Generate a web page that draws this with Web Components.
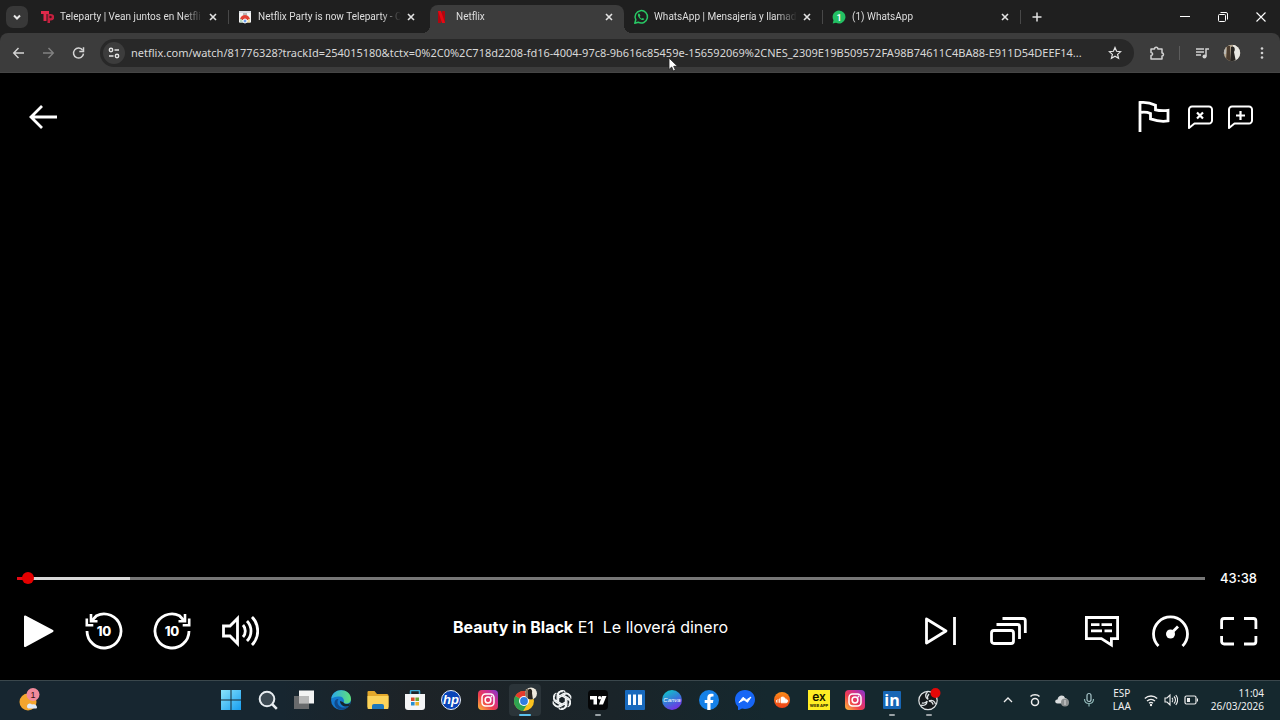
<!DOCTYPE html>
<html lang="es">
<head>
<meta charset="utf-8">
<meta name="viewport" content="width=device-width, initial-scale=1">
<title>Netflix</title>
<style>
    html, body {
        height: 100%;
        margin: 0;
        background: #000;
    }
    body {
        overflow: hidden;
        font-family: "Noto Sans", "Open Sans", sans-serif;
        font-size: 12px;
        color: #e3e3e3;
    }
</style>
</head>
<body>
<desktop-screen>
    <tab-strip slot="browser">
        <browser-tab icon="teleparty" title="Teleparty | Vean juntos en Netfli" divider></browser-tab>
        <browser-tab icon="webstore" title="Netflix Party is now Teleparty - C"></browser-tab>
        <browser-tab icon="netflix" title="Netflix" active></browser-tab>
        <browser-tab icon="whatsapp" title="WhatsApp | Mensajería y llamad" divider></browser-tab>
        <browser-tab icon="wabadge" title="(1) WhatsApp" divider></browser-tab>
    </tab-strip>
    <browser-toolbar slot="browser" url="netflix.com/watch/81776328?trackId=254015180&amp;tctx=0%2C0%2C718d2208-fd16-4004-97c8-9b616c85459e-156592069%2CNES_2309E19B509572FA98B74611C4BA88-E911D54DEEF14..."></browser-toolbar>
    <video-player>
        <icon-button slot="top-left" icon="arrow" label="Volver"></icon-button>
        <icon-button slot="top-right" icon="flag" label="Reportar un problema"></icon-button>
        <icon-button slot="top-right" icon="chatx" label="Ocultar chat"></icon-button>
        <icon-button slot="top-right" icon="chatplus" label="Iniciar party"></icon-button>
        <seek-bar slot="progress" value="11" max="2629" time="43:38"></seek-bar>
        <icon-button slot="left" icon="play" label="Reproducir"></icon-button>
        <icon-button slot="left" icon="rewind" label="Retroceder"></icon-button>
        <icon-button slot="left" icon="forward" label="Adelantar"></icon-button>
        <icon-button slot="left" icon="volume" label="Volumen"></icon-button>
        <span slot="title"><b>Beauty in Black</b> E1&nbsp; Le lloverá dinero</span>
        <icon-button slot="right" icon="next" label="Siguiente episodio"></icon-button>
        <icon-button slot="right" icon="episodes" label="Episodios"></icon-button>
        <icon-button slot="options" icon="subtitles" label="Audio y subtítulos"></icon-button>
        <icon-button slot="options" icon="speed" label="Velocidad"></icon-button>
        <icon-button slot="options" icon="fullscreen" label="Pantalla completa"></icon-button>
    </video-player>
    <task-bar slot="taskbar">
        <icon-button slot="widgets" icon="weather" label="Widgets"></icon-button>
        <task-app icon="start" label="Inicio"></task-app>
        <task-app icon="search" label="Buscar"></task-app>
        <task-app icon="taskview" label="Vista de tareas"></task-app>
        <task-app icon="edge" label="Edge"></task-app>
        <task-app icon="folder" label="Explorador"></task-app>
        <task-app icon="store" label="Store"></task-app>
        <task-app icon="hp" label="HP"></task-app>
        <task-app icon="instagram" label="Instagram"></task-app>
        <task-app icon="chrome" label="Chrome" active></task-app>
        <task-app icon="openai" label="ChatGPT"></task-app>
        <task-app icon="tradingview" label="TradingView" running></task-app>
        <task-app icon="bars" label="Panel"></task-app>
        <task-app icon="canva" label="Canva"></task-app>
        <task-app icon="facebook" label="Facebook"></task-app>
        <task-app icon="messenger" label="Messenger"></task-app>
        <task-app icon="soundcloud" label="SoundCloud"></task-app>
        <task-app icon="ex" label="EX"></task-app>
        <task-app icon="instagram" label="Instagram"></task-app>
        <task-app icon="linkedin" label="LinkedIn" running></task-app>
        <task-app icon="obs" label="OBS" running></task-app>
        <system-tray slot="tray" lang1="ESP" lang2="LAA" time="11:04" date="26/03/2026"></system-tray>
    </task-bar>
</desktop-screen>

<script>
// [width, height, markup]
const ICONS = {
    // browser
    chevron: [12, 12, '<path d="M3 4.5l3 3 3-3" fill="none" stroke="#e8e8e8" stroke-width="2"/>'],
    close: [10, 10, '<path d="M2 2l6 6M8 2L2 8" stroke="#e3e3e3" stroke-width="1.6"/>'],
    plus: [12, 12, '<path d="M6 1.5v9M1.5 6h9" stroke="#e3e3e3" stroke-width="1.5"/>'],
    minimize: [12, 12, '<path d="M1 5.5h10" stroke="#fff"/>'],
    restore: [12, 12, '<rect x="1.5" y="3.5" width="7" height="7" rx="1" fill="none" stroke="#fff"/><path d="M3.500 1.5H9A1.5 1.5 0 0 1 10.500 3v5.500" fill="none" stroke="#fff"/>'],
    winclose: [12, 12, '<path d="M1.5 1.5l9 9M10.500 1.5l-9 9" stroke="#fff" stroke-width="1.1"/>'],
    navback: [14, 14, '<path d="M12 7H2M6.500 2L1.700 7l4.800 5" fill="none" stroke="#d5d5d5" stroke-width="1.4"/>'],
    navnext: [14, 14, '<path d="M1 7h10M6.500 2l4.800 5-4.800 5" fill="none" stroke="#818181" stroke-width="1.4"/>'],
    reload: [14, 14, '<path d="M10.700 4.300A5 5 0 1 0 11.500 7.600" fill="none" stroke="#d5d5d5" stroke-width="1.5"/><path d="M11.500 1.300v4.200H7.300" fill="none" stroke="#d5d5d5" stroke-width="1.5"/>'],
    site: [14, 14, '<g fill="none" stroke="#e3e3e3" stroke-width="1.4"><circle cx="4" cy="4" r="1.7"/><path d="M7.500 4H12M2 10h4.500"/><circle cx="10" cy="10" r="1.7"/></g>'],
    star: [14, 14, '<path d="M7 1.500l1.600 3.800 4.100.35-3.100 2.700.95 4L7 10.200l-3.550 2.150.95-4-3.100-2.700 4.100-.35z" fill="none" stroke="#e3e3e3" stroke-width="1.2"/>'],
    puzzle: [16, 16, '<path d="M2 4h3.500c0-2.400 3.400-2.400 3.400 0H13v4c2 .1 2 2.900 0 3v3H2v-3.600c2.200-.2 2.200-2.600 0-2.800z" fill="none" stroke="#d2d2d2" stroke-width="1.5" stroke-linejoin="round"/>'],
    media: [14, 14, '<path d="M1 3h8M1 6h8M1 9h5" stroke="#d2d2d2" stroke-width="1.4"/><path d="M11 10.500V3h3" fill="none" stroke="#d2d2d2" stroke-width="1.5"/><circle cx="9.500" cy="10.500" r="2" fill="#d2d2d2"/>'],
    avatar: [18, 18, '<clipPath id="a"><circle cx="9" cy="9" r="8.200"/></clipPath><g clip-path="url(#a)"><path fill="#b5a68f" d="M0 0h18v18H0z"/><path fill="#e9e8e2" d="M10 0h8v18h-8z"/><path fill="#4b3c2e" d="M4 2h3v15H3z"/><path fill="#292622" d="M8 3c3-2 5 2 3 5l2 10H7z"/><path fill="#b9b8b4" d="M0 2h3v8H0z"/></g>'],
    menu: [6, 14, '<g fill="#d2d2d2"><circle cx="3" cy="2.500" r="1.300"/><circle cx="3" cy="7" r="1.300"/><circle cx="3" cy="11.500" r="1.300"/></g>'],
    teleparty: [14, 14, '<path d="M1 1h8v3H6.500v7h-3V4H1z" fill="#e0294b"/><path d="M7.500 4H11a3 3 0 0 1 0 6.500h-1V13H7.500z" fill="#c4203f"/><circle cx="10.500" cy="7" r="1.200" fill="#42101a"/>'],
    webstore: [14, 14, '<path fill="#f4f4f4" d="M1 1h12v11.500H1z"/><path d="M1 1h12v2H1z" fill="#d8dde2"/><path d="M2 10a5 5 0 0 1 10 0z" fill="#e04235"/><path d="M2 9v3.500h3.500L3.500 9z" fill="#b9dcc2"/><path d="M12 9v3.500H8.500l2-3.500z" fill="#f5dfa0"/><circle cx="7" cy="11" r="2" fill="#6ea1ee" stroke="#fff"/><path d="M5 4h4" stroke="#777"/>'],
    netflix: [14, 14, '<path d="M2 1h3v12H2zM6 1h3v12H6z" fill="#b1060f"/><path d="M2 1h3l4 12H6z" fill="#e50914"/>'],
    whatsapp: [16, 16, '<path d="M1.800 14.200l1-3.500a6.200 6.200 0 1 1 2.400 2.500z" fill="none" stroke="#28c864" stroke-width="1.5" stroke-linejoin="round"/><path d="M5.500 4.500c-1.500 1.500.2 4 1.500 5.200 1.500 1.300 3.400 2.200 4.400.3l-1.600-1.100-1 .9c-.9-.4-1.700-1.200-2.100-2.100l.7-.9-.9-2.100z" fill="#28c864"/>'],
    wabadge: [14, 14, '<path d="M7 .5a6.500 6.500 0 1 1-3 12.300L.7 13.500l.8-3.200A6.500 6.500 0 0 1 7 .5z" fill="#23c063"/><text x="7" y="10.500" text-anchor="middle" font-size="9" font-weight="600" fill="#fff">1</text>'],

    // player
    arrow: [32, 32, '<path d="M30 16H4M15 5L4 16l11 11" fill="none" stroke="#fff" stroke-width="2.8"/>'],
    flag: [36, 36, '<path d="M3 33V3.500c6-.7 11 .5 15.500 2.700v4.600c4 1 8 1 12.500.6v10.500c-6 1-11 .3-17.500-2V14.500c-3.500-1.500-7-1.500-10.500-1" fill="none" stroke="#fff" stroke-width="2.8"/>'],
    chatx: [26, 26, '<path d="M2 24V5.500a3 3 0 0 1 3-3h17a3 3 0 0 1 3 3v11a3 3 0 0 1-3 3H7.500z" fill="none" stroke="#fff" stroke-width="2" stroke-linejoin="round"/><path d="M10 8.500l6 6M16 8.500l-6 6" stroke="#fff" stroke-width="2.2"/>'],
    chatplus: [26, 26, '<path d="M2 24V5.500a3 3 0 0 1 3-3h17a3 3 0 0 1 3 3v11a3 3 0 0 1-3 3H7.500z" fill="none" stroke="#fff" stroke-width="2" stroke-linejoin="round"/><path d="M13.500 7v9M9 11.500h9" stroke="#fff" stroke-width="2.2"/>'],
    play: [32, 38, '<path d="M2 4.500L29.500 19 2 34z" fill="#fff" stroke="#fff" stroke-width="2" stroke-linejoin="round"/>'],
    rewind: [38, 38, '<path d="M2 19A17 17 0 1 0 11.500 3.700L6.500 9" fill="none" stroke="#fff" stroke-width="2.8"/><path d="M6 2v7.300h6.500M1.800 6.500v6.800h6.500" fill="none" stroke="#fff" stroke-width="2.6"/><text x="19" y="23.500" text-anchor="middle" font-family="Inter, sans-serif" font-size="13" font-weight="800" fill="#fff">10</text>'],
    forward: [38, 38, '<path d="M36 19A17 17 0 1 1 26.500 3.700L31.500 9" fill="none" stroke="#fff" stroke-width="2.8"/><path d="M32 2v7.300h-6.500M36.200 6.500v6.800h-6.500" fill="none" stroke="#fff" stroke-width="2.6"/><text x="19" y="23.500" text-anchor="middle" font-family="Inter, sans-serif" font-size="13" font-weight="800" fill="#fff">10</text>'],
    volume: [38, 38, '<path d="M2.500 14H9l7.500-7.500v25L9 24H2.500zM22 13a9 9 0 0 1 0 12M26 9a14.500 14.500 0 0 1 0 20M31 5a20 20 0 0 1 0 28" fill="none" stroke="#fff" stroke-width="2.8"/>'],
    next: [38, 38, '<path d="M4.500 7L24 19 4.500 31z" fill="none" stroke="#fff" stroke-width="2.8" stroke-linejoin="round"/><path d="M32.500 5v28" stroke="#fff" stroke-width="2.8"/>'],
    episodes: [38, 38, '<g fill="none" stroke="#fff" stroke-width="2.8"><rect x="1.5" y="18.500" width="22" height="13" rx="2.500"/><path d="M6.500 12.500h21a2 2 0 0 1 2 2V27M12.500 6.500H33a2.300 2.300 0 0 1 2.300 2.300V21"/></g>'],
    subtitles: [38, 38, '<path d="M2.400 5.500h31.200v21.100h-6.200V33l-10-6.400h-15z" fill="none" stroke="#fff" stroke-width="2.8"/><path d="M7 12.700h8.500M17.500 12.700H28M7 18.900h11M20.500 18.900H28" stroke="#fff" stroke-width="2.8"/>'],
    speed: [38, 38, '<path d="M6.500 34A17 17 0 1 1 30.500 34" fill="none" stroke="#fff" stroke-width="2.8"/><circle cx="18.500" cy="22" r="4.500" fill="#fff"/><path d="M18.500 22l7.500-7.500" stroke="#fff" stroke-width="2.8"/>'],
    fullscreen: [38, 38, '<path d="M1.600 17V9a2.500 2.500 0 0 1 2.500-2.500H14M24 6.500h9.400A2.500 2.500 0 0 1 35.900 9v8M35.900 24v5.500a2.500 2.500 0 0 1-2.500 2.500H24M14 32H4.100a2.500 2.500 0 0 1-2.500-2.500V24" fill="none" stroke="#fff" stroke-width="2.8"/>'],

    // taskbar
    weather: [26, 26, '<circle cx="11" cy="15" r="8.500" fill="#f3a52e"/><path d="M10 19.500c0-3 3.500-4 5-2 3-1 5 .5 5 3 0 1-1 1-2 1h-6c-1 0-2-.5-2-2z" fill="#dfe9f7"/><circle cx="16" cy="7.500" r="6.500" fill="#f08a9b"/><text x="16" y="11" text-anchor="middle" font-size="9" fill="#311">1</text>'],
    start: [20, 20, '<linearGradient id="w" x1="0" y1="0" x2="1" y2="1"><stop stop-color="#8be4fb"/><stop offset="1" stop-color="#169df0"/></linearGradient><path d="M0 0h9.500v9.500H0zM10.500 0H20v9.500h-9.500zM0 10.500h9.500V20H0zM10.500 10.500H20V20h-9.500z" fill="url(#w)"/>'],
    search: [20, 20, '<circle cx="9" cy="9" r="7.300" fill="#3d4a53" stroke="#e8edf1" stroke-width="2"/><path d="M14 14l4.800 4.800" stroke="#e8edf1" stroke-width="2.500"/>'],
    taskview: [20, 20, '<path d="M5 .5h15v13H5z" fill="#f3f3f3"/><path d="M0 6h15v13H0z" fill="#777" opacity=".85"/><path d="M5 6h10v7.500H5z" fill="#b9b9b9"/>'],
    edge: [20, 20, '<linearGradient id="e"><stop stop-color="#2ba7e8"/><stop offset="1" stop-color="#5fe27a"/></linearGradient><circle cx="10" cy="10" r="10" fill="#1379cf"/><path d="M.3 9C1-3 20-2.500 20 9c0 5-6 5.500-7.500 3.500C14 10 12 6.500 8.500 6.500 4 6.500.5 8 .3 9z" fill="url(#e)"/><path d="M7.500 9c-3 4 1 9 6 8.500 2.500 0 4-1.500 5-2.500C15 22 5 21 3.500 14 3 10.500 5.500 8.500 7.500 9z" fill="#114a8b"/><path d="M12.500 12.500c1.500 2 5 2 7 0L18 16c-4 1.500-9-.5-9-5l3 1z" fill="#17262f"/>'],
    folder: [22, 20, '<path d="M.5 2a1 1 0 0 1 1-1h6l2.500 3H20a1.500 1.500 0 0 1 1.500 1.500V17H.5z" fill="#e3a82b"/><path d="M.5 6h21v12a1 1 0 0 1-1 1h-19a1 1 0 0 1-1-1z" fill="#fbd35a"/><path d="M5 19v-3a2 2 0 0 1 2-2h8a2 2 0 0 1 2 2v3z" fill="#1c77bc"/>'],
    store: [20, 20, '<path d="M5.500 4V1.500a1 1 0 0 1 1-1h7a1 1 0 0 1 1 1V4" fill="none" stroke="#3ca8d2" stroke-width="1.5"/><path d="M0 4h20v13a3 3 0 0 1-3 3H3a3 3 0 0 1-3-3z" fill="#f4f5f6"/><path d="M6 7.500h3.600V11H6z" fill="#d74b28"/><path d="M10.400 7.500H14V11h-3.600z" fill="#6ba634"/><path d="M6 12h3.600v3.500H6z" fill="#268fd0"/><path d="M10.400 12H14v3.500h-3.600z" fill="#edb32a"/>'],
    hp: [22, 22, '<circle cx="11" cy="11" r="9.500" fill="#0a44b8" stroke="#e4ecf8"/><text x="11" y="15" text-anchor="middle" font-size="13" font-style="italic" font-weight="600" fill="#fff">hp</text>'],
    instagram: [20, 20, '<linearGradient id="i" x1="0" y1="1" x2="1" y2="0"><stop stop-color="#fdc03b"/><stop offset=".4" stop-color="#ee3e4c"/><stop offset=".7" stop-color="#ce2d91"/><stop offset="1" stop-color="#7a3bd0"/></linearGradient><rect width="20" height="20" rx="4" fill="url(#i)"/><rect x="4" y="4" width="12" height="12" rx="3.500" fill="none" stroke="#fff" stroke-width="1.5"/><circle cx="10" cy="10" r="2.900" fill="none" stroke="#fff" stroke-width="1.5"/><circle cx="13.500" cy="6.500" r=".9" fill="#fff"/>'],
    chrome: [26, 26, '<circle cx="12" cy="14" r="10" fill="#fbc21e"/><path d="M12 14L3.300 9A10 10 0 0 1 20.700 9z" fill="#e53b2d"/><path d="M12 14L3.300 9A10 10 0 0 0 11 24l5-8z" fill="#2fa351"/><circle cx="12" cy="14" r="5" fill="#fff"/><circle cx="12" cy="14" r="3.900" fill="#2f7de1"/><clipPath id="c"><circle cx="19" cy="6.500" r="6"/></clipPath><g clip-path="url(#c)"><path d="M13 0h13v13H13z" fill="#eee9dd"/><path d="M13 0h3v13h-3z" fill="#85745f"/><path d="M16 3c2-3 5 0 4 3l1 7h-5z" fill="#28231e"/></g>'],
    openai: [22, 22, '<g fill="none" stroke="#f2f5f6" stroke-width="1.4" stroke-linejoin="round"><path id="p" d="M7.500 9V5.500A4 4 0 0 1 14.200 2.700M7.500 13V7.500l5-2.900A4 4 0 0 1 18.500 7.500"/><use href="#p" transform="rotate(60 11 11)"/><use href="#p" transform="rotate(120 11 11)"/><use href="#p" transform="rotate(180 11 11)"/><use href="#p" transform="rotate(240 11 11)"/><use href="#p" transform="rotate(300 11 11)"/></g>'],
    tradingview: [20, 20, '<rect width="20" height="20" rx="4" fill="#050607"/><path d="M2 6h7v8.500H5.500V9.500H2zM14 6h4.500L15 14.500h-4z" fill="#fff"/><circle cx="11.700" cy="7.800" r="1.800" fill="#fff"/>'],
    bars: [20, 20, '<rect width="20" height="20" rx="1" fill="#1769bd"/><path d="M3 4.500h3v10.500H3zM8 4.500h3v10.500H8zM13 4.500h4v10.500h-4z" fill="#f6fbff"/>'],
    canva: [20, 20, '<linearGradient id="v" x1=".2" y1="0" x2=".7" y2="1"><stop stop-color="#11c7c9"/><stop offset=".5" stop-color="#347ad8"/><stop offset="1" stop-color="#7b2be5"/></linearGradient><circle cx="10" cy="10" r="10" fill="url(#v)"/><text x="10" y="12" text-anchor="middle" font-size="6" font-style="italic" fill="#fff">Canva</text>'],
    facebook: [20, 20, '<circle cx="10" cy="10" r="10" fill="#1581e8"/><path d="M8.300 20v-7H5.700v-3h2.600V7.800c0-2.700 1.500-4.100 3.900-4.100.8 0 1.700.1 2.300.2v2.600h-1.300c-1.300 0-1.700.8-1.700 1.600V10h2.900l-.5 3h-2.400v7z" fill="#fff"/>'],
    messenger: [20, 20, '<path d="M10 0c5.700 0 10 4 10 9.500S15.700 19 10 19c-1 0-2-.1-3-.4L4 20c-.5.200-1-.1-1-.6v-2.600A9.200 9.200 0 0 1 0 9.500C0 4 4.300 0 10 0z" fill="#1766f5"/><path d="M4 12.500l4-5.200 3.500 2.600L16 7l-3.500 5.300L9 9.800z" fill="#fff" stroke="#fff" stroke-linejoin="round"/>'],
    soundcloud: [20, 20, '<linearGradient id="s" x2="0" y2="1"><stop stop-color="#fa8b18"/><stop offset="1" stop-color="#ed4018"/></linearGradient><circle cx="10" cy="10" r="8" fill="url(#s)"/><path d="M9 12.800V7.500c2-1.200 4 0 4.300 1.700 3-.4 3.200 3.600.7 3.600zM7.500 8.500v4.300M6 9v3.800M4.500 10v2.500" fill="#fff" stroke="#fff" stroke-width=".8"/>'],
    ex: [22, 20, '<path fill="#ffed24" d="M0 0h22v20H0z"/><text x="11" y="11" text-anchor="middle" font-family="Inter, sans-serif" font-size="12" font-weight="600" fill="#151500">ex</text><text x="11" y="17" text-anchor="middle" font-family="Inter, sans-serif" font-size="4" font-weight="700" fill="#262500">WEB APP</text>'],
    linkedin: [20, 20, '<rect x="1" y="1" width="18" height="18" rx="1" fill="#1766b5"/><text x="10" y="16" text-anchor="middle" font-family="Open Sans, sans-serif" font-size="16" font-weight="700" fill="#fff">in</text>'],
    obs: [26, 26, '<circle cx="12" cy="13.500" r="9.200" fill="#15191b" stroke="#dfe3e4" stroke-width="1.2"/><g fill="none" stroke="#dfe3e4" stroke-width="1.3"><path id="o" d="M12 12.500c-3-2-3-5-.5-7.500M12 12.500c-1-2-.5-4 1-5.500"/><use href="#o" transform="rotate(120 12 13.500)"/><use href="#o" transform="rotate(240 12 13.500)"/></g><circle cx="19.500" cy="6" r="5" fill="#e30808"/>'],

    // tray
    up: [10, 10, '<path d="M1 7l4-4 4 4" fill="none" stroke="#eee" stroke-width="1.3"/>'],
    beacon: [14, 14, '<circle cx="7" cy="9" r="3.500" fill="none" stroke="#eee" stroke-width="1.5"/><path d="M2.500 3.500c2-2.300 7-2.300 9 0" fill="none" stroke="#eee" stroke-width="1.4"/>'],
    cloud: [16, 14, '<path d="M3.500 10.500C0 10 1 6 3.500 6.500 4 2 10 1 11 5c3 0 3.500 5.500 0 5.500z" fill="#d9dcdd"/><circle cx="11" cy="9.500" r="4" fill="#8c9090"/><path d="M11 7v5" stroke="#ddd"/>'],
    mic: [12, 16, '<rect x="4" y="1.500" width="4" height="8" rx="2" fill="none" stroke="#a7c5c9" stroke-width="1.2"/><path d="M1.500 7c0 6 9 6 9 0M6 11.500v3" fill="none" stroke="#8fb7b6" stroke-width="1.2"/>'],
    wifi: [14, 14, '<g fill="none" stroke="#eee" stroke-width="1.3"><path d="M.8 5.500a9 9 0 0 1 12.400 0M3 8a6 6 0 0 1 8 0M5 10.300a3 3 0 0 1 4 0"/></g><circle cx="7" cy="12" r="1.200" fill="#eee"/>'],
    sound: [14, 14, '<path d="M1 5h2l3-3v10L3 9H1zM8 5c1 1 1 3 0 4M10 3.500c2 2 2 5 0 7M11.800 2c2.200 3 2.200 7 0 10" fill="none" stroke="#eee" stroke-width="1.1"/>'],
    battery: [14, 14, '<rect x="1" y="3" width="11" height="8" rx="1.500" fill="none" stroke="#eee" stroke-width="1.2"/><path d="M3 5h3v4H3zM13 5.500h1v3h-1z" fill="#eee"/>']
};

// builds a template from a css string and an html string
function makeTemplate(css, html){
    let template = document.createElement('template');
    template.innerHTML = `<style>${css}</style>${html}`;
    return template;
}

class BaseElement extends HTMLElement {
    constructor(template){
        super();
        this.attachShadow({mode:'open'});
        this.shadowRoot.appendChild(template.content.cloneNode(true));
    }
    find(selector){
        return this.shadowRoot.querySelector(selector);
    }
}

class UiIcon extends HTMLElement {
    constructor(){
        super();
        this.attachShadow({mode:'open'});
    }
    connectedCallback(){
        let [w, h, body] = ICONS[this.getAttribute("name")];
        this.shadowRoot.innerHTML = `
            <style>:host { display: block; flex: none; } svg { display: block; }</style>
            <svg width="${w}" height="${h}" viewBox="0 0 ${w} ${h}" aria-hidden="true">${body}</svg>`;
    }
}
customElements.define('ui-icon', UiIcon);

let buttonTemplate = makeTemplate(`
    :host { display: block; flex: none; }
    button {
        display: grid;
        place-items: center;
        width: 100%;
        height: 100%;
        margin: 0;
        padding: 0;
        border: 0;
        border-radius: inherit;
        background: none;
        cursor: pointer;
    }
`, `<button type="button"></button>`);

class IconButton extends BaseElement {
    constructor(){
        super(buttonTemplate);
    }
    connectedCallback(){
        let button = this.find("button");
        button.setAttribute("aria-label", this.getAttribute("label"));
        button.innerHTML = `<ui-icon name="${this.getAttribute("icon")}"></ui-icon>`;
    }
}
customElements.define('icon-button', IconButton);

let screenTemplate = makeTemplate(`
    :host {
        display: flex;
        flex-direction: column;
        height: 100vh;
    }
    .browser, .taskbar { flex: none; }
    main {
        flex: 1;
        min-height: 0;
        display: flex;
    }
    .cursor {
        position: fixed;
        left: 668px;
        top: 57px;
        pointer-events: none;
    }
`, `
    <header class="browser"><slot name="browser"></slot></header>
    <main><slot></slot></main>
    <footer class="taskbar"><slot name="taskbar"></slot></footer>
    <svg class="cursor" width="12" height="16" viewBox="0 0 12 16" aria-hidden="true">
        <path d="M1 1v11.500l2.700-2.500 1.700 4 2-.9-1.700-3.800H9.500z" fill="#fff" stroke="#222" stroke-width=".8"/>
    </svg>
`);
customElements.define('desktop-screen', class extends BaseElement {
    constructor(){ super(screenTemplate); }
});

let stripTemplate = makeTemplate(`
    :host {
        display: flex;
        align-items: center;
        height: 33px;
        padding-left: 6px;
        background: #1f1f1f;
    }
    .search {
        width: 22px;
        height: 22px;
        margin-right: 6px;
        border-radius: 7px;
        background: #383838;
    }
    nav {
        display: flex;
        flex: 0 1 986px;
        min-width: 0;
        align-self: stretch;
        gap: 4px;
        padding-top: 5px;
        box-sizing: border-box;
    }
    .add { width: 22px; height: 22px; margin-left: 6px; }
    .window { display: flex; margin-left: auto; }
    .window icon-button { width: 38px; height: 32px; }
`, `
    <icon-button class="search" icon="chevron" label="Buscar pestañas"></icon-button>
    <nav><slot></slot></nav>
    <icon-button class="add" icon="plus" label="Nueva pestaña"></icon-button>
    <div class="window">
        <icon-button icon="minimize" label="Minimizar"></icon-button>
        <icon-button icon="restore" label="Restaurar"></icon-button>
        <icon-button icon="winclose" label="Cerrar"></icon-button>
    </div>
`);
customElements.define('tab-strip', class extends BaseElement {
    constructor(){ super(stripTemplate); }
});

let tabTemplate = makeTemplate(`
    :host {
        position: relative;
        display: flex;
        flex: 1;
        min-width: 0;
        align-items: center;
        padding: 0 9px 4px 5px;
        border-radius: 8px 8px 0 0;
    }
    :host([active]) { background: #3c3c3c; }
    :host([active])::before, :host([active])::after {
        content: "";
        position: absolute;
        bottom: 0;
        width: 8px;
        height: 8px;
    }
    :host([active])::before { right: 100%; background: radial-gradient(circle at 0 0, #1f1f1f 8px, #3c3c3c 8px); }
    :host([active])::after { left: 100%; background: radial-gradient(circle at 100% 0, #1f1f1f 8px, #3c3c3c 8px); }
    :host([divider])::after {
        content: "";
        position: absolute;
        left: 100%;
        top: 5px;
        width: 1px;
        height: 14px;
        background: #484848;
    }
    a {
        display: flex;
        flex: 1;
        min-width: 0;
        align-items: center;
        gap: 5px;
        color: #dedede;
        font-family: Roboto, "Noto Sans", sans-serif;
        font-size: 10px;
        line-height: 16px;
        text-decoration: none;
    }
    .icon { display: grid; place-items: center; width: 16px; flex: none; }
    .title {
        flex: 1;
        overflow: hidden;
        white-space: nowrap;
        -webkit-mask-image: linear-gradient(to left, transparent, #000 20px);
        mask-image: linear-gradient(to left, transparent, #000 20px);
    }
    icon-button { width: 12px; height: 12px; margin-left: 4px; }
`, `
    <a href="#"><span class="icon"></span><span class="title"></span></a>
    <icon-button icon="close" label="Cerrar pestaña"></icon-button>
`);
class BrowserTab extends BaseElement {
    constructor(){
        super(tabTemplate);
    }
    connectedCallback(){
        this.find(".icon").innerHTML = `<ui-icon name="${this.getAttribute("icon")}"></ui-icon>`;
        this.find(".title").textContent = this.getAttribute("title");
    }
}
customElements.define('browser-tab', BrowserTab);

let toolbarTemplate = makeTemplate(`
    :host { display: block; background: #1f1f1f; }
    .bar {
        display: flex;
        align-items: center;
        height: 40px;
        padding: 0 3px 0 4px;
        box-sizing: border-box;
        border-bottom: 1px solid #454545;
        border-radius: 8px 8px 0 0;
        background: #3c3c3c;
    }
    .bar > icon-button { width: 30px; height: 28px; }
    .address {
        display: flex;
        flex: 1;
        min-width: 0;
        align-items: center;
        height: 28px;
        margin: 0 8px 0 6px;
        padding: 0 6px 0 3px;
        box-sizing: border-box;
        border-radius: 14px;
        background: #282828;
    }
    .site { width: 22px; height: 22px; border-radius: 11px; background: #3c3c3c; }
    .star { width: 26px; height: 24px; }
    input {
        flex: 1;
        min-width: 0;
        height: 20px;
        margin: 0 8px 0 6px;
        padding: 0;
        border: 0;
        outline: 0;
        background: none;
        color: #d8d8d8;
        font: 11px/20px "Noto Sans", "Open Sans", sans-serif;
        text-overflow: ellipsis;
    }
    .line { width: 1px; height: 14px; margin: 0 7px; background: #5c5c5c; }
`, `
    <div class="bar">
        <icon-button icon="navback" label="Atrás"></icon-button>
        <icon-button icon="navnext" label="Adelante"></icon-button>
        <icon-button icon="reload" label="Recargar"></icon-button>
        <div class="address">
            <icon-button class="site" icon="site" label="Información del sitio"></icon-button>
            <input type="text" aria-label="Dirección" spellcheck="false">
            <icon-button class="star" icon="star" label="Agregar a favoritos"></icon-button>
        </div>
        <icon-button icon="puzzle" label="Extensiones"></icon-button>
        <span class="line"></span>
        <icon-button icon="media" label="Control de medios"></icon-button>
        <icon-button icon="avatar" label="Perfil"></icon-button>
        <icon-button icon="menu" label="Menú"></icon-button>
    </div>
`);
class BrowserToolbar extends BaseElement {
    constructor(){
        super(toolbarTemplate);
    }
    connectedCallback(){
        this.find("input").value = this.getAttribute("url");
    }
}
customElements.define('browser-toolbar', BrowserToolbar);

let playerTemplate = makeTemplate(`
    :host {
        display: flex;
        flex: 1;
        flex-direction: column;
        background: #000;
        color: #fff;
        font-family: Inter, "Liberation Sans", sans-serif;
    }
    .top {
        display: flex;
        align-items: center;
        justify-content: space-between;
        height: 88px;
        padding: 0 27px;
    }
    .actions { display: flex; align-items: center; gap: 14px; }
    .picture { flex: 1; }
    .controls {
        display: flex;
        align-items: center;
        height: 82px;
        padding: 0 22px 0 23px;
        margin-bottom: 8px;
    }
    .group { display: flex; gap: 30px; }
    .options { margin-left: 56px; }
    .title {
        flex: 1;
        padding-bottom: 8px;
        font-size: 16px;
        line-height: 24px;
        text-align: center;
        white-space: nowrap;
    }
`, `
    <div class="top">
        <slot name="top-left"></slot>
        <div class="actions"><slot name="top-right"></slot></div>
    </div>
    <div class="picture"></div>
    <slot name="progress"></slot>
    <div class="controls">
        <div class="group"><slot name="left"></slot></div>
        <div class="title"><slot name="title"></slot></div>
        <div class="group"><slot name="right"></slot></div>
        <div class="group options"><slot name="options"></slot></div>
    </div>
`);
customElements.define('video-player', class extends BaseElement {
    constructor(){ super(playerTemplate); }
});

let seekTemplate = makeTemplate(`
    :host {
        display: flex;
        align-items: center;
        gap: 15px;
        height: 24px;
        padding: 0 23px 0 17px;
    }
    input {
        -webkit-appearance: none;
        appearance: none;
        flex: 1;
        min-width: 0;
        height: 12px;
        margin: 0;
        background: linear-gradient(to right, #e50914 1%, #d8d8d8 1%, #d8d8d8 9.5%, #767676 9.5%) center / 100% 3px no-repeat;
    }
    input::-webkit-slider-thumb {
        -webkit-appearance: none;
        width: 12px;
        height: 12px;
        border-radius: 6px;
        background: #e50000;
    }
    time { font-size: 13px; font-weight: 500; line-height: 16px; }
`, `<input type="range" min="0" aria-label="Progreso"><time></time>`);
class SeekBar extends BaseElement {
    constructor(){
        super(seekTemplate);
    }
    connectedCallback(){
        let input = this.find("input");
        input.max = this.getAttribute("max");
        input.value = this.getAttribute("value");
        this.find("time").textContent = this.getAttribute("time");
    }
}
customElements.define('seek-bar', SeekBar);

let taskbarTemplate = makeTemplate(`
    :host {
        display: grid;
        grid-template-columns: 215px minmax(0, 730px) 1fr;
        align-items: center;
        height: 40px;
        box-shadow: inset 0 1px #3a474c;
        background: linear-gradient(to right, #172630 0%, #172630 22%, #1d2327 32%, #1a2429 48%, #15282e 60%, #15282e 100%);
    }
    .widgets { display: flex; padding-left: 17px; }
    .apps { display: flex; justify-content: space-between; }
    .tray { display: flex; justify-content: flex-end; }
`, `
    <div class="widgets"><slot name="widgets"></slot></div>
    <nav class="apps"><slot></slot></nav>
    <div class="tray"><slot name="tray"></slot></div>
`);
customElements.define('task-bar', class extends BaseElement {
    constructor(){ super(taskbarTemplate); }
});

let appTemplate = makeTemplate(`
    :host {
        position: relative;
        display: block;
        width: 32px;
        height: 32px;
        border-radius: 4px;
    }
    :host([active]) { background: #2b3439; }
    .app { height: 100%; }
    icon-button { height: 100%; }
    :host([active])::after, :host([running])::after {
        content: "";
        position: absolute;
        left: 50%;
        bottom: 0;
        width: 6px;
        height: 2px;
        margin-left: -3px;
        border-radius: 1px;
        background: #99a1a5;
    }
    :host([active])::after { width: 12px; margin-left: -6px; background: #5cc2ee; }
`, `<div class="app"></div>`);
class TaskApp extends BaseElement {
    constructor(){
        super(appTemplate);
    }
    connectedCallback(){
        let icon = this.getAttribute("icon");
        let label = this.getAttribute("label");
        this.find(".app").innerHTML = `<icon-button icon="${icon}" label="${label}"></icon-button>`;
    }
}
customElements.define('task-app', TaskApp);

let trayTemplate = makeTemplate(`
    :host {
        display: flex;
        align-items: center;
        padding-right: 16px;
        color: #f0f0f0;
        font-size: 10px;
        line-height: 13px;
        white-space: nowrap;
    }
    .hidden { display: flex; }
    .hidden icon-button { width: 27px; height: 32px; }
    .lang { width: 38px; text-align: center; }
    .status { display: flex; margin-right: 10px; }
    .status icon-button { width: 20px; height: 32px; }
    .clock { text-align: right; }
`, `
    <div class="hidden">
        <icon-button icon="up" label="Iconos ocultos"></icon-button>
        <icon-button icon="beacon" label="Conexión"></icon-button>
        <icon-button icon="cloud" label="OneDrive"></icon-button>
        <icon-button icon="mic" label="Micrófono"></icon-button>
    </div>
    <div class="lang"><div id="lang1"></div><div id="lang2"></div></div>
    <div class="status">
        <icon-button icon="wifi" label="Red"></icon-button>
        <icon-button icon="sound" label="Sonido"></icon-button>
        <icon-button icon="battery" label="Batería"></icon-button>
    </div>
    <div class="clock"><div id="time"></div><div id="date"></div></div>
`);
class SystemTray extends BaseElement {
    constructor(){
        super(trayTemplate);
    }
    connectedCallback(){
        for (let name of ["lang1", "lang2", "time", "date"]) {
            this.find("#" + name).textContent = this.getAttribute(name);
        }
    }
}
customElements.define('system-tray', SystemTray);
</script>
</body>
</html>
